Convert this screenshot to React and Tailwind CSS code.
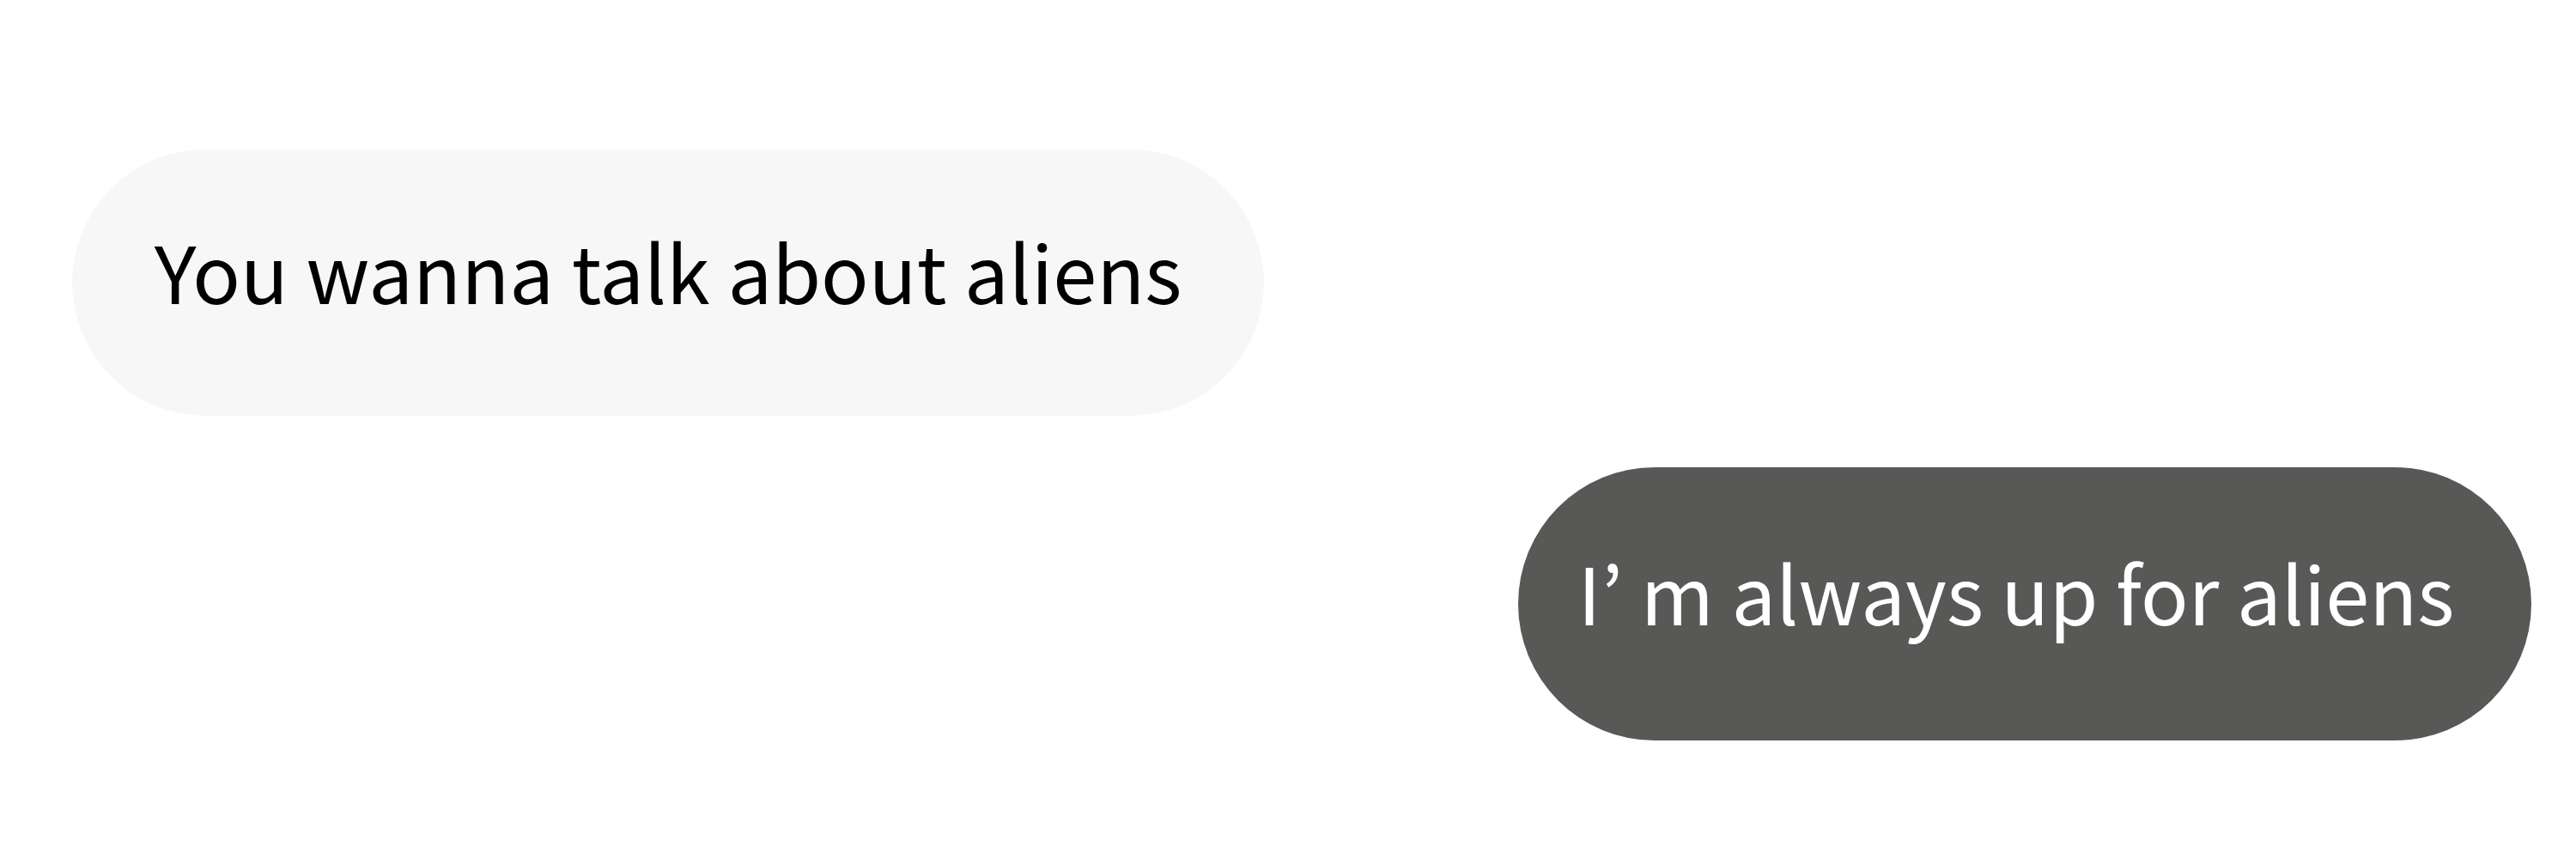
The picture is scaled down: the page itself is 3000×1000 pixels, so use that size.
export default function App() {
  return (
    <div className="w-[3000px] h-[1000px] bg-white flex flex-col" style={{ fontFamily: '"Noto Sans CJK KR", "Noto Sans", sans-serif' }}>
      <div className="self-start ml-[84px] mt-[174px] h-[310px] w-[1388px] pb-[30px] rounded-full bg-[#f7f7f7] flex items-center justify-center text-black text-[92px]">
        You wanna talk about aliens
      </div>
      <div className="self-end mr-[52px] mt-[60px] h-[318px] w-[1180px] pb-[30px] pr-[20px] rounded-full bg-[#585856] flex items-center justify-center text-white text-[92px]">
        I’ m always up for aliens
      </div>
    </div>
  );
}
